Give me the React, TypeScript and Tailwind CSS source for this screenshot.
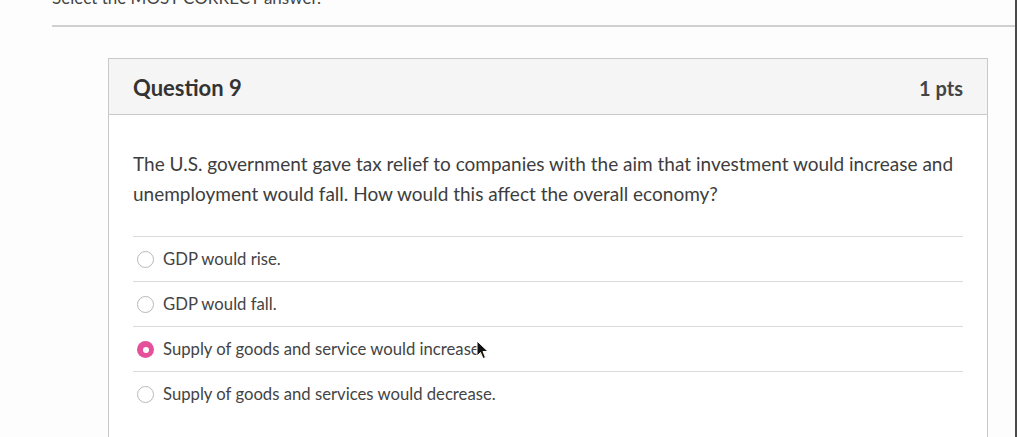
import React from "react";

const answers = [
  { text: "GDP would rise.", selected: false },
  { text: "GDP would fall.", selected: false },
  { text: "Supply of goods and service would increase.", selected: true },
  { text: "Supply of goods and services would decrease.", selected: false },
];

function Radio({ selected }: { selected: boolean }) {
  if (selected) {
    return (
      <span className="flex h-[17px] w-[17px] shrink-0 items-center justify-center rounded-full bg-[#e5509a]">
        <span className="h-[6px] w-[6px] rounded-full bg-white" />
      </span>
    );
  }
  return <span className="h-[17px] w-[17px] shrink-0 rounded-full border border-[#b8b8b8] bg-white" />;
}

export default function App() {
  return (
    <div
      className="relative h-[437px] w-[1017px] overflow-hidden bg-[#fdfdfd] text-[#3a3a3a]"
      style={{ fontFamily: "Lato, 'Open Sans', sans-serif" }}
    >
      <div className="flex h-full">
        <div className="flex-1">
          <div className="-mt-[12px] ml-[52px] h-[20px] text-[17px] leading-[20px] text-[#444]">
            Select the MOST CORRECT answer.
          </div>
          <div className="ml-[52px] mt-[17px] border-t-2 border-[#d0d0d0]" />
          <div className="ml-[108px] mt-[31px] w-[880px] border border-[#c9c9c9] bg-white">
            <div className="flex h-[56px] items-center justify-between border-b border-[#c9c9c9] bg-[#f5f5f5] pl-[24px] pr-[24px] pt-[2px]">
              <span className="text-[22px] font-bold text-[#333]">Question 9</span>
              <span className="text-[20px] font-bold text-[#444]">1 pts</span>
            </div>
            <div className="px-[24px] pt-[34px]">
              <p className="text-[19px] leading-[30px] text-[#3d3d3d]">
                The U.S. government gave tax relief to companies with the aim that investment would increase and
                unemployment would fall. How would this affect the overall economy?
              </p>
              <div className="mt-[27px]">
                {answers.map((a) => (
                  <div
                    key={a.text}
                    className="flex h-[45px] items-center gap-[9px] border-t border-[#dadada] pl-[4px] pt-[1px]"
                  >
                    <Radio selected={a.selected} />
                    <span className="text-[16.7px] text-[#444]">{a.text}</span>
                  </div>
                ))}
                <div className="h-[40px]" />
              </div>
            </div>
          </div>
        </div>
        <div className="w-[2px] bg-[#4a4a4a]" />
      </div>
      <svg
        className="absolute left-[476px] top-[340px]"
        width="14"
        height="20"
        viewBox="0 0 14 20"
      >
        <path d="M1 1 L1 16 L4.5 12.5 L7 18.5 L9.5 17.5 L7 11.5 L12 11.5 Z" fill="#111" stroke="#fff" strokeWidth="1" />
      </svg>
    </div>
  );
}
